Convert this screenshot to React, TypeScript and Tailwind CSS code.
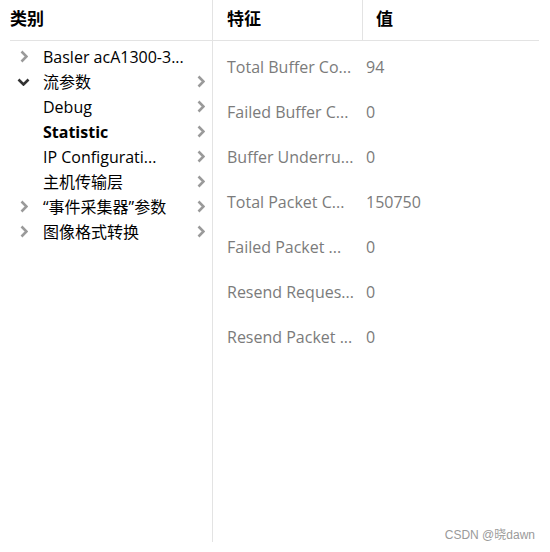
import { FaChevronDown, FaChevronRight } from "react-icons/fa";

const treeItems = [
    { label: "Basler acA1300-3...", state: "closed", arrow: false },
    { label: "流参数", state: "open", arrow: true },
    { label: "Debug", state: "none", arrow: true },
    { label: "Statistic", state: "none", arrow: true, bold: true },
    { label: "IP Configurati...", state: "none", arrow: true },
    { label: "主机传输层", state: "none", arrow: true },
    { label: "“事件采集器”参数", state: "closed", arrow: true },
    { label: "图像格式转换", state: "closed", arrow: true },
];

const features = [
    { name: "Total Buffer Co...", value: "94" },
    { name: "Failed Buffer C...", value: "0" },
    { name: "Buffer Underru...", value: "0" },
    { name: "Total Packet C...", value: "150750" },
    { name: "Failed Packet ...", value: "0" },
    { name: "Resend Reques...", value: "0" },
    { name: "Resend Packet ...", value: "0" },
];

function Chevron({ className }: { className?: string }) {
    return (
        <svg viewBox="0 0 8 13" className={className}>
            <path d="M1.5 1.5 L6.5 6.5 L1.5 11.5" fill="none" stroke="currentColor" strokeWidth="2.6" />
        </svg>
    );
}

export default function App() {
    return (
        <div
            className="relative w-[550px] h-[552px] bg-white text-[16px] text-black"
            style={{ fontFamily: '"Open Sans", "Noto Sans CJK SC", sans-serif' }}
        >
            <div className="flex pl-[10px] h-[542px]">
                {/* category tree */}
                <div className="w-[203px] border-r border-[#e3e3e3] flex flex-col">
                    <div className="h-[41px] border-b border-[#e3e3e3] flex items-center">
                        <span className="text-[17px] font-bold -mt-[2px]">类别</span>
                    </div>
                    <div className="pt-[3px]">
                        {treeItems.map((item) => (
                            <div key={item.label} className="h-[25px] flex items-center pr-[7px]">
                                <div className="w-[33px] flex justify-center pl-[1px] pr-[7px]">
                                    {item.state === "closed" && (
                                        <Chevron className="w-[8px] h-[13px] text-[#9a9a9a]" />
                                    )}
                                    {item.state === "open" && (
                                        <svg viewBox="0 0 13 8" className="w-[13px] h-[8px] text-[#333]">
                                            <path d="M1.5 1.5 L6.5 6.5 L11.5 1.5" fill="none" stroke="currentColor" strokeWidth="2.6" />
                                        </svg>
                                    )}
                                </div>
                                <span className={`flex-1 whitespace-nowrap ${item.bold ? "font-bold" : ""}`}>
                                    {item.label}
                                </span>
                                {item.arrow && <Chevron className="w-[8px] h-[13px] text-[#9a9a9a]" />}
                            </div>
                        ))}
                    </div>
                </div>

                {/* feature table */}
                <div className="w-[326px] flex flex-col">
                    <div className="h-[41px] border-b border-[#e3e3e3] flex">
                        <div className="w-[150px] border-r border-[#e3e3e3] flex items-center pl-[14px]">
                            <span className="text-[17px] font-bold -mt-[2px]">特征</span>
                        </div>
                        <div className="flex-1 flex items-center pl-[13px]">
                            <span className="text-[17px] font-bold -mt-[2px]">值</span>
                        </div>
                    </div>
                    <div className="pt-[3px] text-[#7b7b7b]">
                        {features.map((f) => (
                            <div key={f.name} className="h-[45px] flex items-center">
                                <span className="w-[153px] pl-[14px] whitespace-nowrap">{f.name}</span>
                                <span>{f.value}</span>
                            </div>
                        ))}
                    </div>
                </div>
            </div>

            <div
                className="absolute right-[15px] bottom-[8px] text-[12px] text-[#9a9a9a]"
                style={{ fontFamily: '"Liberation Sans", "Noto Sans CJK SC", sans-serif' }}
            >
                CSDN @晓dawn
            </div>
        </div>
    );
}
